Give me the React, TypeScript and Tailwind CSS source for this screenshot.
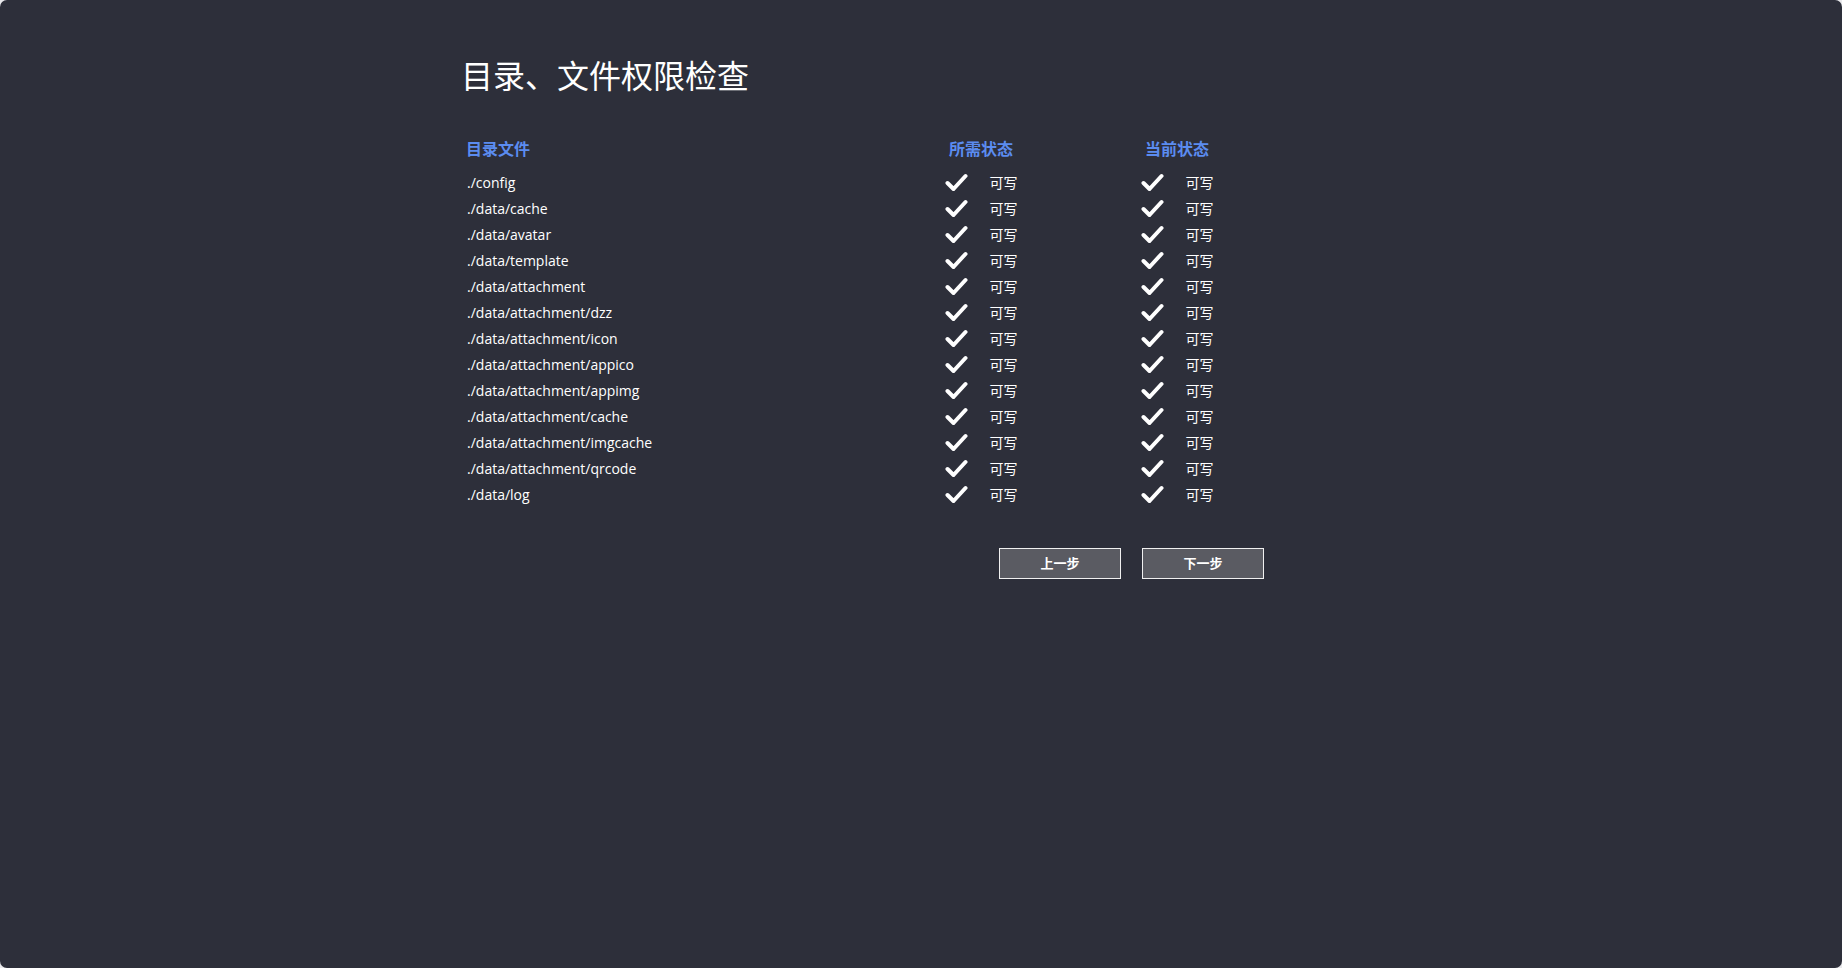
import React from 'react';

interface Row {
  path: string;
  required: string;
  current: string;
}

const rows: Row[] = [
  './config',
  './data/cache',
  './data/avatar',
  './data/template',
  './data/attachment',
  './data/attachment/dzz',
  './data/attachment/icon',
  './data/attachment/appico',
  './data/attachment/appimg',
  './data/attachment/cache',
  './data/attachment/imgcache',
  './data/attachment/qrcode',
  './data/log',
].map((path) => ({ path, required: '可写', current: '可写' }));

const Check: React.FC = () => (
  <svg width="23" height="19" viewBox="0 0 23 19" fill="none" className="shrink-0">
    <path d="M2.5 10l6 6L20.5 3" stroke="white" strokeWidth={4} strokeLinecap="round" strokeLinejoin="round" />
  </svg>
);

const Status: React.FC<{ text: string }> = ({ text }) => (
  <div className="flex items-center justify-center gap-[22px]">
    <Check />
    <span>{text}</span>
  </div>
);

const App: React.FC = () => {
  return (
    <div className="w-[1842px] h-[968px] bg-[#e9e9ec]">
      <div
        className="w-full h-full rounded-[7px] bg-[#2d2f3a] text-white overflow-hidden"
        style={{ fontFamily: '"Open Sans", "Noto Sans CJK SC", sans-serif' }}
      >
        <div className="w-[916px] mx-auto pt-[52px]">
          <h1 className="text-[32px] leading-[48px] font-normal -ml-[2px]">目录、文件权限检查</h1>

          <div className="mt-[30px] ml-[3px] w-[809px]">
            {/* header */}
            <div className="grid grid-cols-[417px_196px_196px] h-[39px] pb-[2px] items-center text-[16px] font-bold text-[#5b8cf0]">
              <div>目录文件</div>
              <div className="text-center">所需状态</div>
              <div className="text-center">当前状态</div>
            </div>

            {rows.map((row) => (
              <div key={row.path} className="grid grid-cols-[417px_196px_196px] h-[26px] items-center text-[14px]">
                <div className="pl-[1px]">{row.path}</div>
                <Status text={row.required} />
                <Status text={row.current} />
              </div>
            ))}
          </div>

          <div className="flex gap-[21px] mt-[41px] ml-[536px]">
            <button className="w-[122px] h-[31px] bg-[#5a5b62] border border-[#f0f0f0] text-[13px] font-bold text-white">
              上一步
            </button>
            <button className="w-[122px] h-[31px] bg-[#5a5b62] border border-[#f0f0f0] text-[13px] font-bold text-white">
              下一步
            </button>
          </div>
        </div>
      </div>
    </div>
  );
};

export default App;
